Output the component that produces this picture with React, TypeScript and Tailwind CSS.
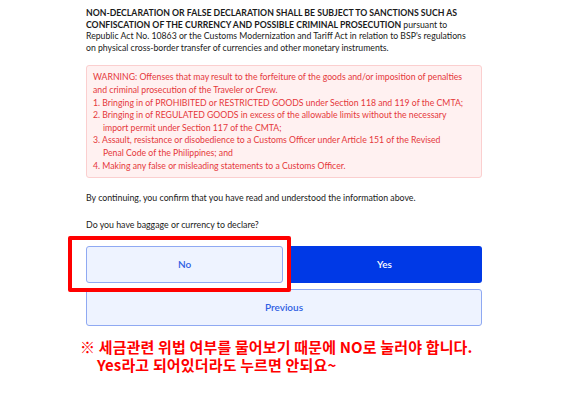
import React from "react";

export default function App() {
  const font = { fontFamily: "Lato, 'Noto Sans', sans-serif" };
  return (
    <div className="relative w-[567px] h-[403px] bg-white overflow-hidden" style={font}>
      <div className="ml-[86px] w-[396px] pt-[7px]">
        <div className="text-[8.7px] leading-[11.6px] text-[#1a1a1a] whitespace-nowrap">
          <div className="font-bold">NON-DECLARATION OR FALSE DECLARATION SHALL BE SUBJECT TO SANCTIONS SUCH AS</div>
          <div>
            <span className="font-bold">CONFISCATION OF THE CURRENCY AND POSSIBLE CRIMINAL PROSECUTION</span> pursuant to
          </div>
          <div>Republic Act No. 10863 or the Customs Modernization and Tariff Act in relation to BSP's regulations</div>
          <div>on physical cross-border transfer of currencies and other monetary instruments.</div>
        </div>

        <div className="mt-[12px] h-[113px] rounded-[3px] border border-[#fbcfcf] bg-[#fff1f1] px-[6px] pt-[5px] text-[8.7px] leading-[12.6px] text-[#e5383b] whitespace-nowrap">
          <div>WARNING: Offenses that may result to the forfeiture of the goods and/or imposition of penalties</div>
          <div>and criminal prosecution of the Traveler or Crew.</div>
          <div>1. Bringing in of PROHIBITED or RESTRICTED GOODS under Section 118 and 119 of the CMTA;</div>
          <div>2. Bringing in of REGULATED GOODS in excess of the allowable limits without the necessary</div>
          <div className="pl-[10px]">import permit under Section 117 of the CMTA;</div>
          <div>3. Assault, resistance or disobedience to a Customs Officer under Article 151 of the Revised</div>
          <div className="pl-[10px]">Penal Code of the Philippines; and</div>
          <div>4. Making any false or misleading statements to a Customs Officer.</div>
        </div>

        <div className="mt-[14px] text-[8.8px] leading-[12px] text-[#1a1a1a] whitespace-nowrap">
          By continuing, you confirm that you have read and understood the information above.
        </div>
        <div className="mt-[15px] text-[8.8px] leading-[12px] text-[#1a1a1a] whitespace-nowrap">
          Do you have baggage or currency to declare?
        </div>

        <div className="mt-[15px] flex gap-[4px]">
          <button className="h-[37px] flex-1 rounded-[3px] border border-[#8fa9f2] bg-[#eef3ff] text-[10px] font-semibold text-[#2f5fe3]">
            No
          </button>
          <button className="h-[37px] flex-1 rounded-[3px] bg-[#0039e6] text-[10px] font-semibold text-white">
            Yes
          </button>
        </div>
        <button className="mt-[6px] h-[37px] w-full rounded-[3px] border border-[#8fa9f2] bg-[#eef3ff] text-[10px] font-semibold text-[#2f5fe3]">
          Previous
        </button>
      </div>

      <div className="absolute left-[68px] top-[236px] h-[56px] w-[223px] rounded-[2px] border-[4px] border-[#ff0000]" />

      <div
        className="ml-[80px] mt-[12px] text-[15px] leading-[18px] font-bold text-[#ff0000] whitespace-nowrap"
        style={{ fontFamily: "'Noto Sans CJK KR', 'Noto Sans', sans-serif" }}
      >
        <div className="tracking-[0.15px]">※ 세금관련 위법 여부를 물어보기 때문에 NO로 눌러야 합니다.</div>
        <div className="pl-[17px] tracking-[0.15px]">Yes라고 되어있더라도 누르면 안되요~</div>
      </div>
    </div>
  );
}
